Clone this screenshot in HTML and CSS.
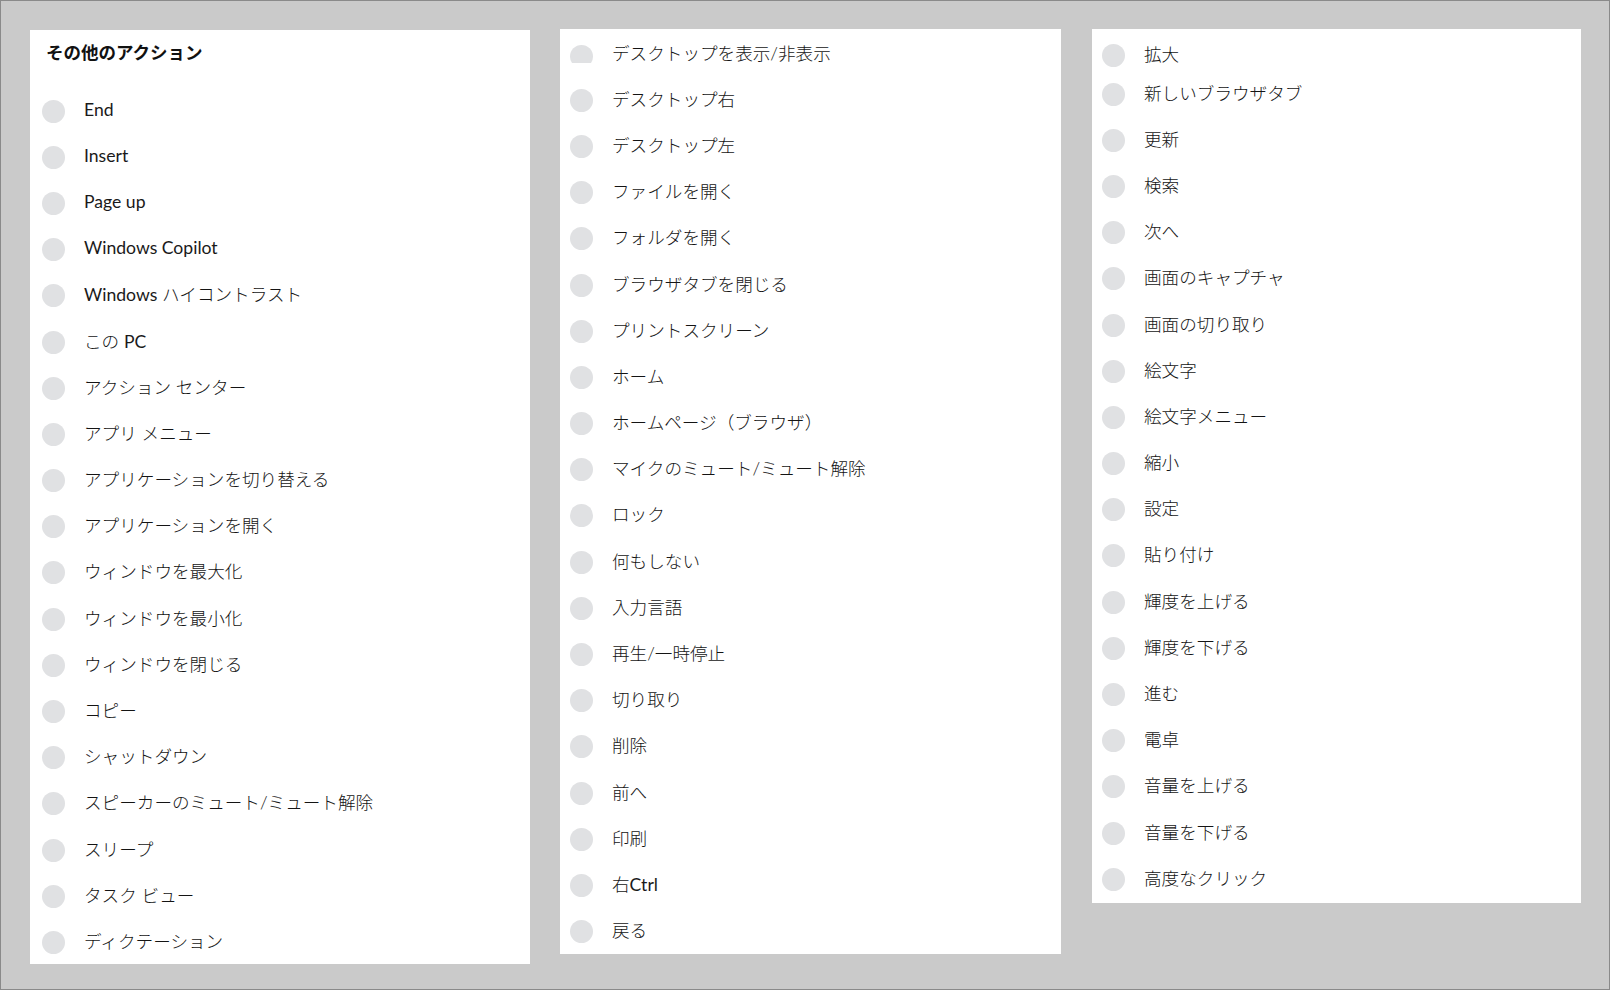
FILE: index.html
```html
<!DOCTYPE html>
<html lang="ja">
<head>
  <meta charset="UTF-8">
  <title>その他のアクション</title>
  <link rel="stylesheet" href="styles.css">
</head>
<body>
  <div class="frame">

    <div class="panel panel-one">
      <div class="panel-title">その他のアクション</div>
      <div class="row"><span class="dot"></span><span class="label"><span class="en">End</span></span></div>
      <div class="row"><span class="dot"></span><span class="label"><span class="en">Insert</span></span></div>
      <div class="row"><span class="dot"></span><span class="label"><span class="en">Page up</span></span></div>
      <div class="row"><span class="dot"></span><span class="label"><span class="en">Windows Copilot</span></span></div>
      <div class="row"><span class="dot"></span><span class="label"><span class="en">Windows</span> ハイコントラスト</span></div>
      <div class="row"><span class="dot"></span><span class="label">この <span class="en">PC</span></span></div>
      <div class="row"><span class="dot"></span><span class="label">アクション センター</span></div>
      <div class="row"><span class="dot"></span><span class="label">アプリ メニュー</span></div>
      <div class="row"><span class="dot"></span><span class="label">アプリケーションを切り替える</span></div>
      <div class="row"><span class="dot"></span><span class="label">アプリケーションを開く</span></div>
      <div class="row"><span class="dot"></span><span class="label">ウィンドウを最大化</span></div>
      <div class="row"><span class="dot"></span><span class="label">ウィンドウを最小化</span></div>
      <div class="row"><span class="dot"></span><span class="label">ウィンドウを閉じる</span></div>
      <div class="row"><span class="dot"></span><span class="label">コピー</span></div>
      <div class="row"><span class="dot"></span><span class="label">シャットダウン</span></div>
      <div class="row"><span class="dot"></span><span class="label">スピーカーのミュート/ミュート解除</span></div>
      <div class="row"><span class="dot"></span><span class="label">スリープ</span></div>
      <div class="row"><span class="dot"></span><span class="label">タスク ビュー</span></div>
      <div class="row"><span class="dot"></span><span class="label">ディクテーション</span></div>
    </div>

    <div class="panel panel-two">
      <div class="row"><span class="dot cut"></span><span class="label">デスクトップを表示/非表示</span></div>
      <div class="row"><span class="dot"></span><span class="label">デスクトップ右</span></div>
      <div class="row"><span class="dot"></span><span class="label">デスクトップ左</span></div>
      <div class="row"><span class="dot"></span><span class="label">ファイルを開く</span></div>
      <div class="row"><span class="dot"></span><span class="label">フォルダを開く</span></div>
      <div class="row"><span class="dot"></span><span class="label">ブラウザタブを閉じる</span></div>
      <div class="row"><span class="dot"></span><span class="label">プリントスクリーン</span></div>
      <div class="row"><span class="dot"></span><span class="label">ホーム</span></div>
      <div class="row"><span class="dot"></span><span class="label">ホームページ（ブラウザ）</span></div>
      <div class="row"><span class="dot"></span><span class="label">マイクのミュート/ミュート解除</span></div>
      <div class="row"><span class="dot"></span><span class="label">ロック</span></div>
      <div class="row"><span class="dot"></span><span class="label">何もしない</span></div>
      <div class="row"><span class="dot"></span><span class="label">入力言語</span></div>
      <div class="row"><span class="dot"></span><span class="label">再生/一時停止</span></div>
      <div class="row"><span class="dot"></span><span class="label">切り取り</span></div>
      <div class="row"><span class="dot"></span><span class="label">削除</span></div>
      <div class="row"><span class="dot"></span><span class="label">前へ</span></div>
      <div class="row"><span class="dot"></span><span class="label">印刷</span></div>
      <div class="row"><span class="dot"></span><span class="label">右<span class="en">Ctrl</span></span></div>
      <div class="row"><span class="dot"></span><span class="label">戻る</span></div>
    </div>

    <div class="panel panel-three">
      <div class="row first"><span class="dot"></span><span class="label">拡大</span></div>
      <div class="row"><span class="dot"></span><span class="label">新しいブラウザタブ</span></div>
      <div class="row"><span class="dot"></span><span class="label">更新</span></div>
      <div class="row"><span class="dot"></span><span class="label">検索</span></div>
      <div class="row"><span class="dot"></span><span class="label">次へ</span></div>
      <div class="row"><span class="dot"></span><span class="label">画面のキャプチャ</span></div>
      <div class="row"><span class="dot"></span><span class="label">画面の切り取り</span></div>
      <div class="row"><span class="dot"></span><span class="label">絵文字</span></div>
      <div class="row"><span class="dot"></span><span class="label">絵文字メニュー</span></div>
      <div class="row"><span class="dot"></span><span class="label">縮小</span></div>
      <div class="row"><span class="dot"></span><span class="label">設定</span></div>
      <div class="row"><span class="dot"></span><span class="label">貼り付け</span></div>
      <div class="row"><span class="dot"></span><span class="label">輝度を上げる</span></div>
      <div class="row"><span class="dot"></span><span class="label">輝度を下げる</span></div>
      <div class="row"><span class="dot"></span><span class="label">進む</span></div>
      <div class="row"><span class="dot"></span><span class="label">電卓</span></div>
      <div class="row"><span class="dot"></span><span class="label">音量を上げる</span></div>
      <div class="row"><span class="dot"></span><span class="label">音量を下げる</span></div>
      <div class="row"><span class="dot"></span><span class="label">高度なクリック</span></div>
    </div>

  </div>
</body>
</html>
```

FILE: styles.css
```css
html, body { margin: 0; padding: 0; }
body {
  font-family: Lato, "Noto Sans CJK JP", sans-serif;
  color: #141414;
  background: #cacaca;
}
.frame {
  box-sizing: border-box;
  width: 1610px;
  height: 990px;
  border: 1px solid #8a8a8a;
  background: #cacaca;
  display: flex;
  align-items: flex-start;
  padding: 28px 0 0 29px;
}
.panel { background: #fff; box-sizing: border-box; }
.panel-one { width: 500px; margin-top: 1px; padding-left: 12px; }
.panel-two { width: 501px; margin-left: 30px; padding-left: 10px; padding-bottom: 1px; }
.panel-three { width: 489px; margin-left: 31px; padding-left: 10px; padding-bottom: 2.4px; }

.panel-title {
  font-weight: 700;
  font-size: 17.5px;
  line-height: 20px;
  padding: 13px 4px 23px;
  color: #111;
}

.row {
  display: flex;
  align-items: center;
  height: 46.2px;
  font-size: 17.6px;
  font-weight: 300;
}
.row.first { height: 40px; padding-top: 8px; box-sizing: border-box; }
.dot {
  flex: none;
  width: 23px;
  height: 23px;
  margin-top: 4px;
  border-radius: 50%;
  background: #e0e1e3;
}
.dot.cut { margin-top: 8px; clip-path: inset(0 0 4.5px 0); }
.label { margin-left: 19px; white-space: nowrap; }
.en { font-weight: 400; color: #1a1a1a; }
```
